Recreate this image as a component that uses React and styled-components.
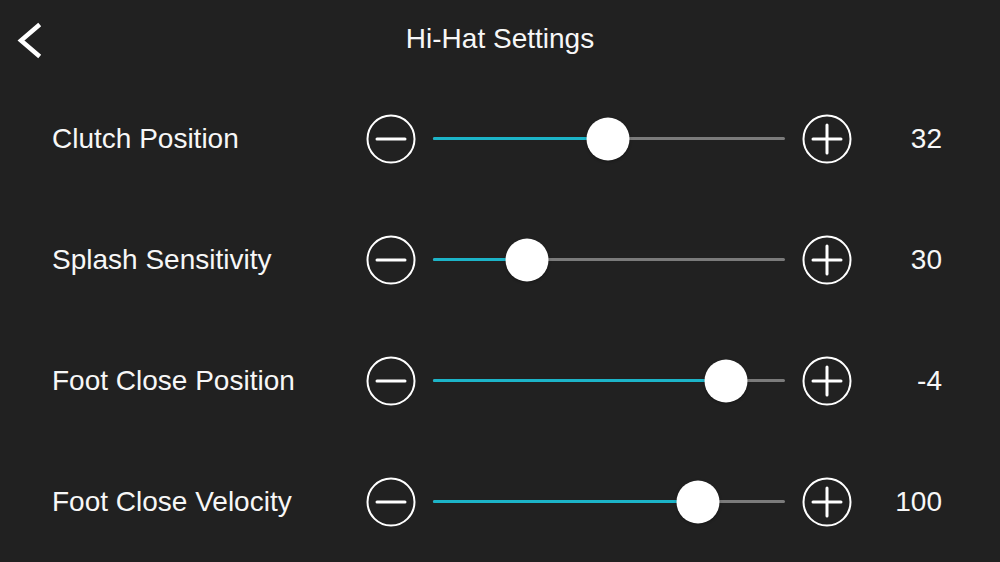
import React from 'react';
import styled, { createGlobalStyle } from 'styled-components';

const GlobalStyle = createGlobalStyle`
  html, body {
    margin: 0;
    padding: 0;
    background: #212121;
  }
  body {
    font-family: "Liberation Sans", Arial, sans-serif;
    color: #f7f7f7;
  }
`;

const Screen = styled.div`
  width: 1000px;
  height: 562px;
  background: #212121;
  overflow: hidden;
`;

const Header = styled.div`
  height: 78px;
  display: flex;
  align-items: center;
  justify-content: center;
  position: relative;
`;

const BackButton = styled.button`
  position: absolute;
  left: 10px;
  top: 16px;
  width: 36px;
  height: 48px;
  padding: 0;
  border: none;
  background: transparent;
  display: flex;
  align-items: center;
  justify-content: center;
  cursor: pointer;
`;

const Title = styled.h1`
  margin: 0;
  font-size: 28px;
  font-weight: normal;
  letter-spacing: 0;
`;

const List = styled.div`
  display: flex;
  flex-direction: column;
`;

const Row = styled.div`
  height: 121px;
  display: grid;
  grid-template-columns: 297px 50px 352px 50px 73px;
  column-gap: 17px;
  align-items: center;
  padding-left: 52px;
`;

const Label = styled.span`
  font-size: 28px;
`;

const RoundButton = styled.button`
  width: 50px;
  height: 50px;
  padding: 0;
  border: none;
  background: transparent;
  display: flex;
  align-items: center;
  justify-content: center;
  cursor: pointer;
`;

const Track = styled.div`
  position: relative;
  height: 3px;
  background: #7b7b7b;
  border-radius: 2px;
`;

const Fill = styled.div`
  position: absolute;
  left: 0;
  top: 0;
  bottom: 0;
  background: #1cb4c8;
  border-radius: 2px;
`;

const Thumb = styled.div`
  position: absolute;
  top: 50%;
  width: 43px;
  height: 43px;
  border-radius: 50%;
  background: #ffffff;
  transform: translate(-50%, -50%);
  box-shadow: 0 1px 3px rgba(0, 0, 0, 0.35);
`;

const Value = styled.span`
  font-size: 28px;
  text-align: right;
`;

const ChevronLeft = () => (
  <svg width="30" height="40" viewBox="0 0 30 40">
    <path d="M25 6 L8 20.5 L25 35" fill="none" stroke="#fff" strokeWidth="4.5" strokeLinecap="square" />
  </svg>
);

const CircleIcon = ({ plus }) => (
  <svg width="50" height="50" viewBox="0 0 50 50">
    <circle cx="25" cy="25" r="23.5" fill="none" stroke="#fff" strokeWidth="2" />
    <line x1="11" y1="25" x2="39" y2="25" stroke="#fff" strokeWidth="3" strokeLinecap="round" />
    {plus && <line x1="25" y1="11" x2="25" y2="39" stroke="#fff" strokeWidth="3" strokeLinecap="round" />}
  </svg>
);

const settings = [
  { label: 'Clutch Position', value: '32', pos: 0.497 },
  { label: 'Splash Sensitivity', value: '30', pos: 0.267 },
  { label: 'Foot Close Position', value: '-4', pos: 0.832 },
  { label: 'Foot Close Velocity', value: '100', pos: 0.753 },
];

function SettingRow({ label, value, pos }) {
  const pct = `${pos * 100}%`;
  return (
    <Row>
      <Label>{label}</Label>
      <RoundButton aria-label="decrease">
        <CircleIcon />
      </RoundButton>
      <Track>
        <Fill style={{ width: pct }} />
        <Thumb style={{ left: pct }} />
      </Track>
      <RoundButton aria-label="increase">
        <CircleIcon plus />
      </RoundButton>
      <Value>{value}</Value>
    </Row>
  );
}

export default function App() {
  return (
    <Screen>
      <GlobalStyle />
      <Header>
        <BackButton aria-label="back">
          <ChevronLeft />
        </BackButton>
        <Title>Hi-Hat Settings</Title>
      </Header>
      <List>
        {settings.map((s) => (
          <SettingRow key={s.label} {...s} />
        ))}
      </List>
    </Screen>
  );
}
